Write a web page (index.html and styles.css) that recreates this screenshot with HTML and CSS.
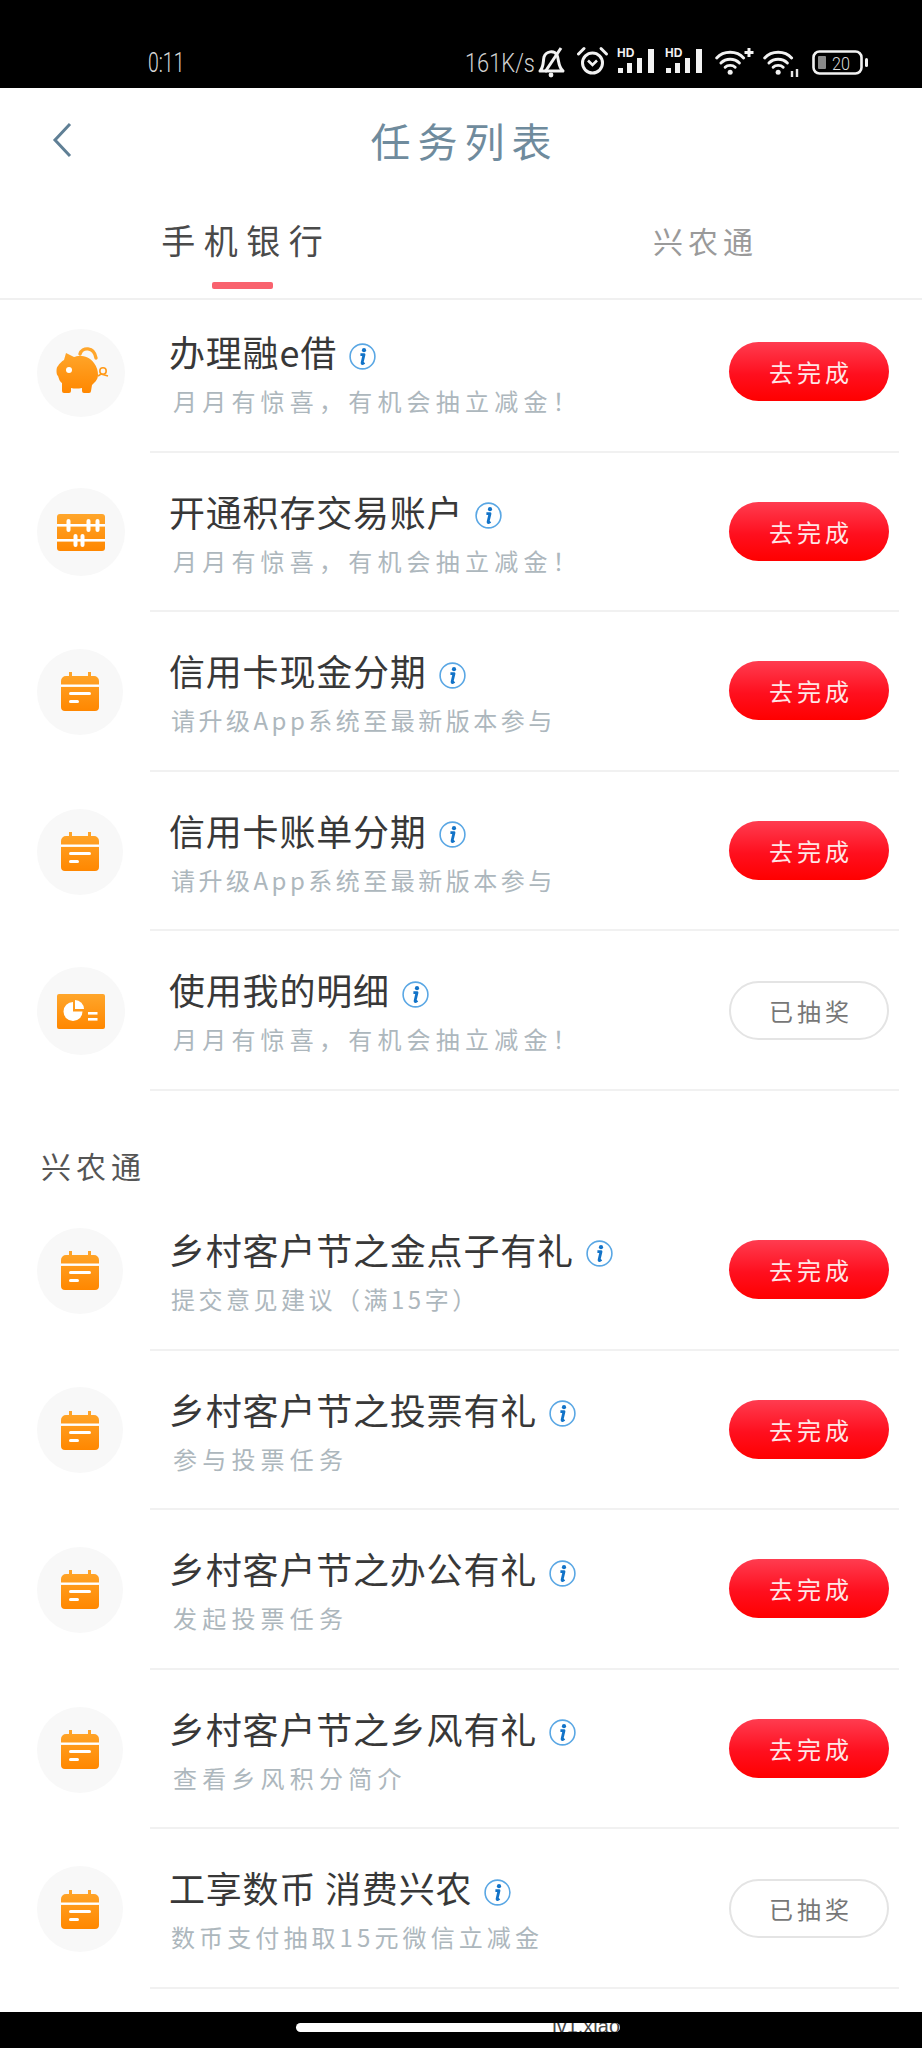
FILE: index.html
```html
<!DOCTYPE html>
<html lang="zh-CN">
<head>
<meta charset="utf-8">
<title>任务列表</title>
<link rel="stylesheet" href="styles.css">
</head>
<body>
<svg class="defs" width="0" height="0" aria-hidden="true">
  <defs>
    <linearGradient id="orange" x1="0" y1="0" x2="0" y2="1">
      <stop offset="0" stop-color="#ffa62b"/>
      <stop offset="1" stop-color="#ff8700"/>
    </linearGradient>
    <symbol id="i-info" viewBox="0 0 27 27">
      <circle cx="13.5" cy="13.5" r="12.4" fill="none" stroke="#5aa7e4" stroke-width="1.6"/>
      <circle cx="15" cy="7.2" r="2.1" fill="#1273c8"/>
      <path d="M11.4 11.6h3.6l-1.9 8.2c-.2 1 .7 1 2.2-.3" fill="none" stroke="#1273c8" stroke-width="2.8" stroke-linejoin="round"/>
    </symbol>
    <symbol id="i-pig" viewBox="0 0 53 49">
      <path d="M24 9C26 2 38 1 40 13" fill="none" stroke="#ffa62b" stroke-width="3.4" stroke-linecap="round"/>
      <path d="M10 8L18 12C22 10 33 10 38 18C41 22 42 26 42 30C42 35 38 38 36 40L35 46Q35 48 33 48L28 48Q26 48 26 46L26 43Q20 44 15 43L15 46Q15 48 13 48L8 48Q6 48 6 46L6 38C3 36 3 33 2 31C0 30 0 22 2 21C3 19 6 16 8 15Z" fill="url(#orange)"/>
      <circle cx="13" cy="25" r="3" fill="#fff"/>
      <circle cx="47" cy="26" r="3.2" fill="none" stroke="#ff9a1a" stroke-width="1.6"/>
      <path d="M42 31L45 29L52 31" fill="none" stroke="#ff9a1a" stroke-width="1.6"/>
    </symbol>
    <symbol id="i-abacus" viewBox="0 0 48 37">
      <rect width="48" height="37" rx="3" fill="url(#orange)"/>
      <g fill="#fff">
        <rect y="10" width="48" height="2.6"/>
        <rect y="25" width="48" height="2.6"/>
        <rect x="9.5" y="5" width="4" height="13" rx="2"/>
        <rect x="29.5" y="5" width="4" height="13" rx="2"/>
        <rect x="38.5" y="5" width="4" height="13" rx="2"/>
        <rect x="16.5" y="20" width="4" height="13" rx="2"/>
        <rect x="23.5" y="20" width="4" height="13" rx="2"/>
      </g>
    </symbol>
    <symbol id="i-cal" viewBox="0 0 38 39">
      <path d="M8 0h3v4h16v-4h3v4h3a5 5 0 0 1 5 5v26a4 4 0 0 1-4 4H4a4 4 0 0 1-4-4V9a5 5 0 0 1 5-5h3z" fill="url(#orange)"/>
      <g fill="#fff">
        <rect y="12.5" width="38" height="2.4"/>
        <rect x="8" y="20" width="22" height="3" rx="1.5"/>
        <rect x="8" y="28" width="10" height="3" rx="1.5"/>
      </g>
    </symbol>
    <symbol id="i-report" viewBox="0 0 48 35">
      <rect width="48" height="35" rx="2" fill="url(#orange)"/>
      <path d="M16 8a9.5 9.5 0 1 0 9.5 9.5H16z" fill="#fff"/>
      <path d="M18 6a9 9 0 0 1 9 9h-9z" fill="#fff"/>
      <rect x="31" y="18" width="9.5" height="2.6" fill="#fff"/>
      <rect x="31" y="24" width="9.5" height="2.6" fill="#fff"/>
    </symbol>
    <symbol id="i-wifi" viewBox="0 0 38 32">
      <g fill="none" stroke="#f2f2f2" stroke-width="3.4" stroke-linecap="round">
        <path d="M2 10C10 1 26 1 34 10"/>
        <path d="M7 16C13 10 23 10 29 16"/>
        <path d="M12 21C15 18 21 18 24 21"/>
      </g>
      <circle cx="18" cy="27" r="3" fill="#f2f2f2"/>
    </symbol>
  </defs>
</svg>

<header class="status">
  <span class="status-time">0:11</span>
  <div class="status-right">
    <span class="status-speed"><span class="status-speed-text">161K/s</span></span>
    <svg class="si si-40" viewBox="0 0 40 32">
      <g fill="none" stroke="#f2f2f2" stroke-width="3" stroke-linejoin="round">
        <path d="M3 25C7 21 6 15 7 11C9 5 17 4 20 9C22 14 21 21 26 25Z"/>
        <path d="M24 2L8 26"/>
      </g>
      <circle cx="14" cy="29" r="2.4" fill="#f2f2f2"/>
    </svg>
    <svg class="si si-40" viewBox="0 0 40 32">
      <g fill="none" stroke="#f2f2f2" stroke-width="3" stroke-linecap="round" stroke-linejoin="round">
        <circle cx="15.5" cy="17" r="10"/>
        <path d="M1.5 8L7 2.5"/>
        <path d="M29.5 8L24 2.5"/>
      </g>
      <path d="M11 14.5l4.5 4.5 4.5-4.5" fill="none" stroke="#f2f2f2" stroke-width="2.6"/>
    </svg>
    <svg class="si si-48" viewBox="0 0 48 32">
      <text class="si-hd" x="0" y="11">HD</text>
      <g fill="#f2f2f2"><rect x="1" y="22" width="5" height="5"/><rect x="10" y="17" width="5" height="10"/><rect x="20" y="12" width="5" height="15"/><rect x="31" y="3" width="6" height="24"/></g>
    </svg>
    <svg class="si si-50" viewBox="0 0 50 32">
      <text class="si-hd" x="0" y="11">HD</text>
      <g fill="#f2f2f2"><rect x="1" y="22" width="5" height="5"/><rect x="10" y="17" width="5" height="10"/><rect x="20" y="12" width="5" height="15"/><rect x="31" y="3" width="6" height="24"/></g>
    </svg>
    <svg class="si si-48" viewBox="0 0 48 32">
      <use href="#i-wifi" width="32" height="30" y="2"/>
      <path d="M34 2v9M29.500 6.500h9" stroke="#f2f2f2" stroke-width="3"/>
    </svg>
    <svg class="si si-49" viewBox="0 0 49 32">
      <use href="#i-wifi" width="32" height="30" y="2"/>
      <path d="M29 25v6M34 23v8" stroke="#e6e6e6" stroke-width="2.4"/>
    </svg>
    <svg class="si si-56" viewBox="0 0 56 32">
      <rect x="1.500" y="5.500" width="48" height="22" rx="6" fill="none" stroke="#f2f2f2" stroke-width="2.6"/>
      <rect x="6" y="10" width="8" height="13" rx="1" fill="#8a8a8a"/>
      <text class="si-batt" x="20" y="24" textLength="18" lengthAdjust="spacingAndGlyphs">20</text>
      <rect x="53" y="12" width="3" height="9" rx="1.500" fill="#f2f2f2"/>
    </svg>
  </div>
</header>

<main class="page">
  <div class="navbar">
    <div class="navbar-back">
      <svg class="back-icon" viewBox="0 0 20 36"><path d="M18 2L3 18L18 34" fill="none" stroke="#5f7f95" stroke-width="3"/></svg>
    </div>
    <h1 class="navbar-title">任务列表</h1>
    <div></div>
  </div>

  <nav class="tabs">
    <div class="tab tab--on"><span class="tab-label">手机银行</span><span class="tab-bar"></span></div>
    <div class="tab"><span class="tab-label">兴农通</span></div>
  </nav>

  <section class="list">
    <article class="row">
      <div class="badge"><svg class="ico ico-pig"><use href="#i-pig"/></svg></div>
      <div class="row-body">
        <div class="row-text">
          <div class="row-title"><span>办理融e借</span><svg class="info"><use href="#i-info"/></svg></div>
          <p class="row-sub">月月有惊喜，有机会抽立减金！</p>
        </div>
        <button class="btn">去完成</button>
      </div>
    </article>
    <article class="row">
      <div class="badge"><svg class="ico ico-abacus"><use href="#i-abacus"/></svg></div>
      <div class="row-body">
        <div class="row-text">
          <div class="row-title"><span>开通积存交易账户</span><svg class="info"><use href="#i-info"/></svg></div>
          <p class="row-sub">月月有惊喜，有机会抽立减金！</p>
        </div>
        <button class="btn">去完成</button>
      </div>
    </article>
    <article class="row">
      <div class="badge badge--sm"><svg class="ico ico-cal"><use href="#i-cal"/></svg></div>
      <div class="row-body">
        <div class="row-text">
          <div class="row-title"><span>信用卡现金分期</span><svg class="info"><use href="#i-info"/></svg></div>
          <p class="row-sub row-sub--tight">请升级App系统至最新版本参与</p>
        </div>
        <button class="btn">去完成</button>
      </div>
    </article>
    <article class="row">
      <div class="badge badge--sm"><svg class="ico ico-cal"><use href="#i-cal"/></svg></div>
      <div class="row-body">
        <div class="row-text">
          <div class="row-title"><span>信用卡账单分期</span><svg class="info"><use href="#i-info"/></svg></div>
          <p class="row-sub row-sub--tight">请升级App系统至最新版本参与</p>
        </div>
        <button class="btn">去完成</button>
      </div>
    </article>
    <article class="row">
      <div class="badge"><svg class="ico ico-report"><use href="#i-report"/></svg></div>
      <div class="row-body">
        <div class="row-text">
          <div class="row-title"><span>使用我的明细</span><svg class="info"><use href="#i-info"/></svg></div>
          <p class="row-sub">月月有惊喜，有机会抽立减金！</p>
        </div>
        <button class="btn btn--done">已抽奖</button>
      </div>
    </article>
  </section>

  <h2 class="group-title">兴农通</h2>

  <section class="list list--second">
    <article class="row">
      <div class="badge badge--sm"><svg class="ico ico-cal"><use href="#i-cal"/></svg></div>
      <div class="row-body">
        <div class="row-text">
          <div class="row-title"><span>乡村客户节之金点子有礼</span><svg class="info"><use href="#i-info"/></svg></div>
          <p class="row-sub row-sub--tight">提交意见建议（满15字）</p>
        </div>
        <button class="btn">去完成</button>
      </div>
    </article>
    <article class="row">
      <div class="badge badge--sm"><svg class="ico ico-cal"><use href="#i-cal"/></svg></div>
      <div class="row-body">
        <div class="row-text">
          <div class="row-title"><span>乡村客户节之投票有礼</span><svg class="info"><use href="#i-info"/></svg></div>
          <p class="row-sub">参与投票任务</p>
        </div>
        <button class="btn">去完成</button>
      </div>
    </article>
    <article class="row">
      <div class="badge badge--sm"><svg class="ico ico-cal"><use href="#i-cal"/></svg></div>
      <div class="row-body">
        <div class="row-text">
          <div class="row-title"><span>乡村客户节之办公有礼</span><svg class="info"><use href="#i-info"/></svg></div>
          <p class="row-sub">发起投票任务</p>
        </div>
        <button class="btn">去完成</button>
      </div>
    </article>
    <article class="row">
      <div class="badge badge--sm"><svg class="ico ico-cal"><use href="#i-cal"/></svg></div>
      <div class="row-body">
        <div class="row-text">
          <div class="row-title"><span>乡村客户节之乡风有礼</span><svg class="info"><use href="#i-info"/></svg></div>
          <p class="row-sub">查看乡风积分简介</p>
        </div>
        <button class="btn">去完成</button>
      </div>
    </article>
    <article class="row">
      <div class="badge badge--sm"><svg class="ico ico-cal"><use href="#i-cal"/></svg></div>
      <div class="row-body">
        <div class="row-text">
          <div class="row-title"><span>工享数币 消费兴农</span><svg class="info"><use href="#i-info"/></svg></div>
          <p class="row-sub row-sub--mid">数币支付抽取15元微信立减金</p>
        </div>
        <button class="btn btn--done">已抽奖</button>
      </div>
    </article>
  </section>
</main>

<footer class="navbar-bottom">
  <div class="home-pill"><span class="home-mark">lv1.xiao</span></div>
</footer>
</body>
</html>
```
FILE: styles.css
```css
* { box-sizing: border-box; }
html, body { margin: 0; padding: 0; }
body {
  width: 922px;
  height: 2048px;
  display: flex;
  flex-direction: column;
  overflow: hidden;
  background: #fff;
  font-family: "Noto Sans CJK SC", "Noto Sans", sans-serif;
  color: #333;
}
.defs { position: absolute; }

/* status bar */
.status {
  flex: none;
  height: 88px;
  background: #000;
  padding: 46px 54px 0 148px;
  display: flex;
  justify-content: space-between;
  align-items: flex-start;
}
.status-time {
  display: inline-block;
  font: 300 27px/34px "Roboto", sans-serif;
  color: #d8d8d8;
  transform: scaleX(0.72);
  transform-origin: left center;
}
.status-right { display: flex; align-items: flex-start; }
.status-speed {
  width: 72px;
  flex: none;
  overflow: visible;
}
.status-speed-text {
  display: inline-block;
  font: 300 26px/34px "Roboto", sans-serif;
  color: #d0d0d0;
  white-space: nowrap;
  transform: scaleX(0.84);
  transform-origin: left center;
}
.si { display: block; height: 32px; flex: none; }
.si-40 { width: 40px; }
.si-48 { width: 48px; }
.si-49 { width: 49px; }
.si-50 { width: 50px; }
.si-56 { width: 56px; }
.si-hd { font: 700 12px "Liberation Sans", sans-serif; fill: #f2f2f2; }
.si-batt { font: 300 19px "Roboto", sans-serif; fill: #dcdcdc; }

/* main */
.page { flex: 1; min-height: 0; overflow: hidden; }
.navbar {
  height: 104px;
  display: grid;
  grid-template-columns: 1fr auto 1fr;
  align-items: center;
}
.navbar-back { padding-left: 52px; display: flex; }
.back-icon { width: 20px; height: 36px; }
.navbar-title {
  margin: 0;
  font-size: 40px;
  font-weight: 400;
  line-height: 50px;
  letter-spacing: 7px;
  text-indent: 7px;
  color: #6f8b9d;
}

.tabs {
  height: 108px;
  display: grid;
  grid-template-columns: 484px 438px;
  border-bottom: 2px solid #f0f0f0;
}
.tab {
  display: flex;
  flex-direction: column;
  align-items: center;
  padding-top: 10px;
}
.tab-label {
  height: 80px;
  line-height: 76px;
  font-size: 30px;
  letter-spacing: 5px;
  text-indent: 5px;
  color: #9a9a9a;
}
.tab--on .tab-label {
  font-size: 34px;
  letter-spacing: 8.5px;
  text-indent: 8.5px;
  color: #4a4a4a;
}
.tab-bar {
  width: 61px;
  height: 7px;
  border-radius: 2px;
  background: #f9626e;
}

.list { margin-top: -7px; }
.list--second { margin-top: 0; }
.row {
  display: flex;
  height: 159.6px;
  padding: 0 23px 0 37px;
}
.badge {
  flex: none;
  align-self: center;
  width: 88px;
  height: 88px;
  margin-right: 25px;
  border-radius: 50%;
  background: #f8f8f8;
  display: flex;
  align-items: center;
  justify-content: center;
}
.badge--sm {
  width: 86px;
  height: 86px;
  margin-right: 27px;
}
.ico { display: block; }
.ico-pig { width: 53px; height: 49px; margin-top: -6px; margin-left: 3px; }
.ico-abacus { width: 48px; height: 37px; }
.ico-cal { width: 38px; height: 39px; }
.ico-report { width: 48px; height: 35px; }

.row-body {
  flex: 1;
  min-width: 0;
  display: flex;
  align-items: center;
  justify-content: space-between;
  padding: 0 10px 0 19px;
  border-bottom: 2px solid #f1f1f1;
}
.row-text { align-self: flex-start; padding-top: 36px; }
.row-title {
  display: flex;
  align-items: center;
  height: 44px;
  font-size: 36px;
  line-height: 44px;
  letter-spacing: 0.8px;
  color: #383838;
}
.info {
  flex: none;
  width: 27px;
  height: 27px;
  margin: 10px 0 0 12px;
}
.row-sub {
  margin: 10px 0 0 4px;
  font-size: 24px;
  line-height: 36px;
  letter-spacing: 5.2px;
  color: #adb7bd;
  white-space: nowrap;
}
.row-sub--tight { letter-spacing: 3.5px; margin-left: 2px; }
.row-sub--mid { letter-spacing: 4.1px; margin-left: 2px; }

.btn {
  flex: none;
  width: 160px;
  height: 59px;
  margin: 0;
  padding: 0;
  border: 0;
  border-radius: 30px;
  background: linear-gradient(180deg, #ff3c50 0%, #ff0f1e 55%, #ff0000 100%);
  font-family: inherit;
  font-size: 24px;
  letter-spacing: 4px;
  text-indent: 4px;
  color: #ffe6e6;
}
.btn--done {
  background: #fff;
  border: 2px solid #e4e4e4;
  color: #777;
}

.group-title {
  margin: 0;
  height: 100px;
  padding: 53px 0 0 41px;
  font-size: 30px;
  font-weight: 400;
  line-height: 42px;
  letter-spacing: 5px;
  color: #555;
}

/* bottom gesture bar */
.navbar-bottom {
  flex: none;
  height: 36px;
  background: #000;
  padding: 11px 0 0 296px;
}
.home-pill {
  width: 324px;
  height: 9px;
  border-radius: 5px;
  background: #fff;
  overflow: hidden;
  display: flex;
  justify-content: flex-end;
}
.home-mark {
  font: 20px/6px "Liberation Sans", sans-serif;
  color: #444;
  letter-spacing: 0;
}
```
